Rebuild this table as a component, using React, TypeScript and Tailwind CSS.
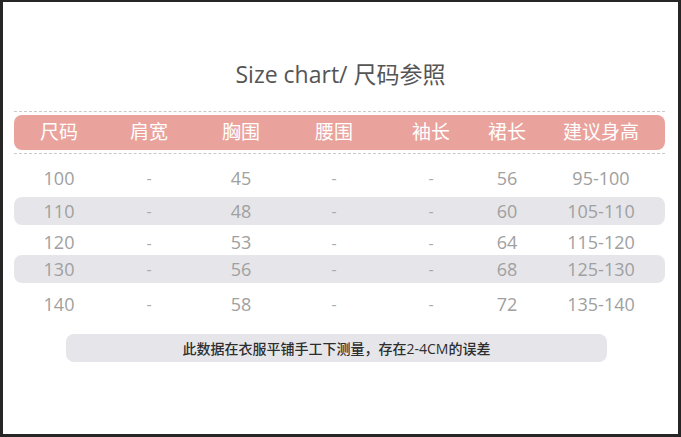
const headers = ['尺码', '肩宽', '胸围', '腰围', '袖长', '裙长', '建议身高'];

const rows = [
  { cells: ['100', '-', '45', '-', '-', '56', '95-100'], shaded: false, cls: 'mt-[10px] h-[28px]' },
  { cells: ['110', '-', '48', '-', '-', '60', '105-110'], shaded: true, cls: 'mt-[5px] h-[28px]' },
  { cells: ['120', '-', '53', '-', '-', '64', '115-120'], shaded: false, cls: 'mt-[4px] h-[26px]' },
  { cells: ['130', '-', '56', '-', '-', '68', '125-130'], shaded: true, cls: 'h-[28px]' },
  { cells: ['140', '-', '58', '-', '-', '72', '135-140'], shaded: false, cls: 'mt-[7px] h-[28px]' },
];

const gridCols = 'grid grid-cols-[90px_90px_94px_92px_102px_50px_133px]';

export default function App() {
  return (
    <div
      className="w-[681px] h-[437px] box-border bg-white border-[3px] border-t-2 border-[#262626] overflow-hidden"
      style={{ fontFamily: '"Open Sans", "Noto Sans CJK SC", sans-serif' }}
    >
      <h1 className="pt-[57px] text-center text-[23px] leading-[30px] text-[#555] font-normal">
        Size chart/ 尺码参照
      </h1>

      <div className="ml-[11px] w-[651px]">
        {/* header bar between dashed rules */}
        <div className="mt-[22px] py-[3px] border-y border-dashed border-[#c9c9c9]">
          <div className={`${gridCols} h-[35px] items-center rounded-[8px] bg-[#e9a39c] text-white text-[19px]`}>
            {headers.map((h, i) => (
              <div key={h} className={`text-center ${i === 6 ? 'pl-[5px]' : ''}`}>{h}</div>
            ))}
          </div>
        </div>

        {rows.map((row) => (
          <div
            key={row.cells[0]}
            className={`${gridCols} ${row.cls} items-center rounded-[8px] text-[18px] text-[#a0a0a0] ${row.shaded ? 'bg-[#e6e6ea]' : ''}`}
          >
            {row.cells.map((c, i) => (
              <div key={i} className={`text-center ${c === '-' ? 'text-[#ababab] text-[16px]' : ''} ${i === 6 ? 'pl-[5px]' : ''}`}>
                {c}
              </div>
            ))}
          </div>
        ))}

        <div className="mt-[16px] ml-[52px] w-[541px] h-[28px] flex items-center justify-center rounded-[8px] bg-[#e6e6ea] text-[14px] font-medium text-[#2e2e2e]">
          此数据在衣服平铺手工下测量，存在2-4CM的误差
        </div>
      </div>
    </div>
  );
}
